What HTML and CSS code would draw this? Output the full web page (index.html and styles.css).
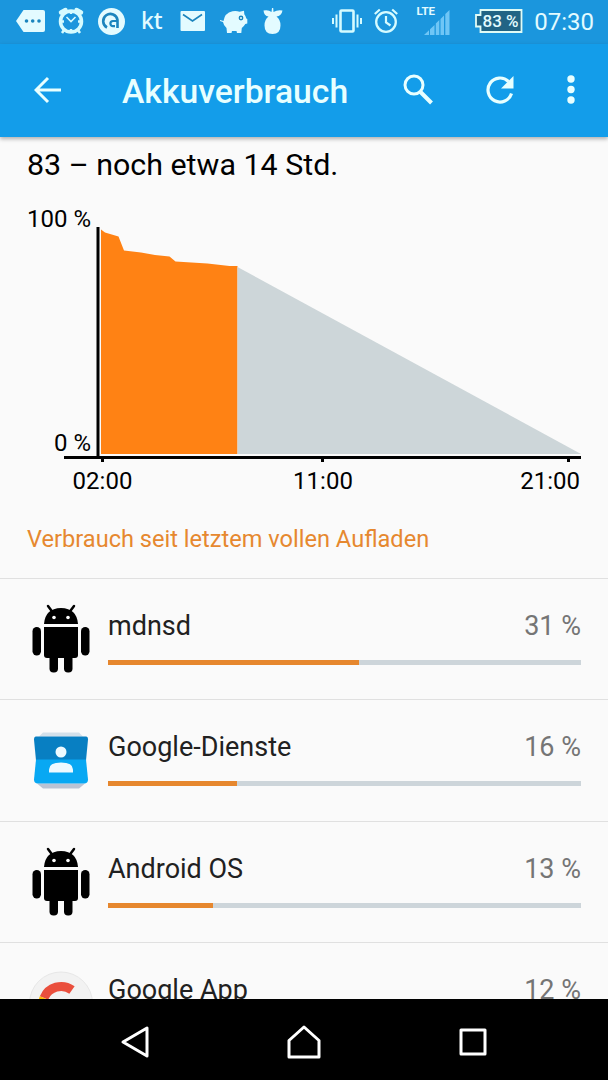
FILE: index.html
```html
<!DOCTYPE html>
<html lang="de">
<head>
    <meta charset="UTF-8">
    <meta name="viewport" content="width=device-width, initial-scale=1.0">
    <title>Akkuverbrauch</title>
    <link rel="stylesheet" href="styles.css">
</head>
<body>
    <div class="status-bar">
        <div class="notifications">
            <svg width="30" height="44" viewBox="16 0 30 44">
                <path class="fill" d="M23.500 10H43q2 0 2 2V30q0 2-2 2H23.500L16 21Z"/>
                <g class="hole"><circle cx="26.500" cy="21" r="1.800"/><circle cx="32.700" cy="21" r="1.800"/><circle cx="39" cy="21" r="1.800"/></g>
            </svg>
            <svg class="alarm-app" width="28" height="44" viewBox="57 0 28 44">
                <circle class="line" cx="71" cy="21.500" r="10.500" stroke-width="3.500"/>
                <path class="line" d="M61 12.500l4.500-2.500M81 12.500l-4.500-2.500" stroke-width="4.500" stroke-linecap="round"/>
                <path class="line" d="M66.500 17l4.500 4.500 4.500-4.500" stroke-width="1.600"/>
                <path class="line" d="M64 30l-2 3M78 30l2 3M71 12v2M71 29v2M62 21.500h2M78 21.500h2" stroke-width="2.500"/>
            </svg>
            <svg class="at-app" width="28" height="44" viewBox="98 0 28 44">
                <circle class="fill" cx="111.500" cy="21.500" r="13.500"/>
                <path class="hole-line" d="M107 27.500A7.200 7.200 0 1 1 117.500 20V28" stroke-width="2.600"/>
                <path class="hole-line" d="M117.500 21H113a2.600 2.600 0 0 0 0 5.200h2" stroke-width="2.200"/>
            </svg>
            <span class="kt">kt</span>
            <svg class="mail-app" width="26" height="44" viewBox="180 0 26 44">
                <rect class="fill" x="180.500" y="11" width="24.500" height="20" rx="1"/>
                <path class="hole-line" d="M183 14.500l9.500 6.500 9.500-6.500" stroke-width="1.600"/>
            </svg>
            <svg class="pig-app" width="28" height="44" viewBox="220 0 28 44">
                <path class="fill" d="M220 20l3.500 1q1-8 9-9.800 4-.7 7 .5l4.500-1 .3 3.500q1.700 2 2 4.300l1 .5v4.500l-2 .5q-1.500 2.500-3.500 4l-.5 5h-4.300l-.5-2h-4.500l-.5 2h-4.500l-.5-5q-3-2.500-3.500-6l-3-1Z"/>
                <circle class="hole-line" cx="241" cy="18" r="1.700" stroke-width="1.400"/>
            </svg>
            <svg class="fruit-app" width="20" height="44" viewBox="263 0 20 44">
                <path class="fill" d="M272 8h1.200l.3 4q4-2.500 9-1.500-1 5.500-6 6 4 3 4 9 0 8.500-8 8.500t-8-8.500q0-6 4-9-4.500-.5-5-6 5-1 8 1.500Z"/>
            </svg>
        </div>
        <div class="system">
            <svg width="32" height="44" viewBox="331 0 32 44">
                <rect class="line" x="340.500" y="10.500" width="13" height="21" rx="1" stroke-width="2.600"/>
                <path class="line" d="M336.500 14.500v13M333 18v6M357.500 14.500v13M361 18v6" stroke-width="2"/>
            </svg>
            <svg class="alarm" width="26" height="44" viewBox="373 0 26 44">
                <circle class="line" cx="386" cy="22" r="9.800" stroke-width="2.300"/>
                <path class="line" d="M374.800 14l5-4.500M397.200 14l-5-4.500M386 16v6.500l4.500 3" stroke-width="2.200"/>
            </svg>
            <svg class="signal" width="34" height="44" viewBox="416 0 34 44">
                <path class="signal-fill" d="M424 35l5-4.800V35ZM430 29.300l4.500-4.300V35H430ZM435.800 23.500l3.500-3.500V35h-3.500ZM440.500 19l3.500-3.500V35h-3.500ZM445.300 14l4.200-4V35h-4.200Z"/>
                <text class="lte" x="416.500" y="14.500">LTE</text>
            </svg>
            <svg class="battery" width="48" height="44" viewBox="475 0 48 44">
                <path class="battery-shell" d="M480.500 10H521.500V32H480.500V26.500H476V15h4.500Z"/>
                <text class="battery-text" x="482.500" y="27">83 %</text>
            </svg>
            <span class="clock">07:30</span>
        </div>
    </div>

    <div class="app-bar">
        <svg class="back" width="28" height="28" viewBox="0 0 28 28">
            <path d="M27 14H3M14 2L2 14l12 12" fill="none" stroke="#e8ffff" stroke-width="3"/>
        </svg>
        <h1>Akkuverbrauch</h1>
        <svg class="search" width="32" height="32" viewBox="0 0 32 32">
            <circle cx="12" cy="11" r="9" fill="none" stroke="#e8ffff" stroke-width="3"/>
            <path d="M18 17.500l11.500 11.500" fill="none" stroke="#e8ffff" stroke-width="4"/>
        </svg>
        <svg class="refresh" width="30" height="30" viewBox="0 0 30 30">
            <path d="M26.500 18.500A12 12 0 1 1 23.500 6.500" fill="none" stroke="#e8ffff" stroke-width="3.200"/>
            <path d="M28.500 1v12.500h-12.500Z" fill="#e8ffff"/>
        </svg>
        <svg class="more" width="8" height="30" viewBox="0 0 8 30">
            <g fill="#e8ffff"><circle cx="4" cy="4" r="3.700"/><circle cx="4" cy="14.500" r="3.700"/><circle cx="4" cy="25" r="3.700"/></g>
        </svg>
    </div>

    <div class="content">
        <h2>83 – noch etwa 14 Std.</h2>
        <svg class="chart" width="608" height="310" viewBox="0 190 608 310">
            <path d="M101 454V229.500l4 3 13.500 4 5.500 14 17 2 14 2.500 14.500 1.500 6 5 32 2 22 2.500h8V454Z" fill="#ff8214"/>
            <path d="M237.500 267L581 454H237.500Z" fill="#cdd6d9"/>
            <path d="M98 227V458M64 457.500H581M102.500 457v5M322.500 457v5M568.500 457v5" fill="none" stroke="#000" stroke-width="3"/>
            <g class="chart-label">
                <text x="91" y="227" text-anchor="end">100 %</text>
                <text x="91" y="450.500" text-anchor="end">0 %</text>
                <text x="102.500" y="488.500" text-anchor="middle">02:00</text>
                <text x="323" y="488.500" text-anchor="middle">11:00</text>
                <text x="580" y="488.500" text-anchor="end">21:00</text>
            </g>
        </svg>
        <h3>Verbrauch seit letztem vollen Aufladen</h3>

        <div class="item">
            <svg class="icon" width="66" height="72" viewBox="0 0 66 72">
                <use href="#android"/>
            </svg>
            <div class="info">
                <div class="label"><span>mdnsd</span><span class="percent">31 %</span></div>
                <div class="bar"><div class="used" style="width: 53.1%"></div></div>
            </div>
        </div>
        <div class="item">
            <svg class="icon" width="66" height="72" viewBox="0 -3.500 66 72">
                <path d="M11 9l4-4h36l4 4Z" fill="#d3e0ea"/>
                <path d="M9 56h48l-6 5H15Z" fill="#bac3d4"/>
                <path d="M8 9h50q2 0 2 3l-2 21H8L6 12q0-3 2-3Z" fill="#087fc2"/>
                <path d="M8 32h50l2 20q0 4-4 4H10q-4 0-4-4Z" fill="#08a8f3"/>
                <circle cx="33" cy="24.500" r="5.500" fill="#eefaff"/>
                <path d="M21 45v-3q0-7 12-7t12 7v3Z" fill="#eefaff"/>
            </svg>
            <div class="info">
                <div class="label"><span>Google-Dienste</span><span class="percent">16 %</span></div>
                <div class="bar"><div class="used" style="width: 27.2%"></div></div>
            </div>
        </div>
        <div class="item">
            <svg class="icon" width="66" height="72" viewBox="0 0 66 72">
                <g id="android">
                    <path d="M16 21q1-15.500 17-16 16 .5 17 16Z"/>
                    <path d="M20 3l4.500 6M46 3l-4.500 6" stroke="#000" stroke-width="2.500" stroke-linecap="round"/>
                    <circle cx="26" cy="14.500" r="1.800" fill="#fff"/>
                    <circle cx="40" cy="14.500" r="1.800" fill="#fff"/>
                    <path d="M16 24h34V52q0 3-3 3H19q-3 0-3-3Z"/>
                    <rect x="4.500" y="24" width="8.500" height="28.500" rx="4.200"/>
                    <rect x="53" y="24" width="8.500" height="28.500" rx="4.200"/>
                    <rect x="21.500" y="47" width="8.500" height="22.500" rx="4"/>
                    <rect x="36" y="47" width="8.500" height="22.500" rx="4"/>
                </g>
            </svg>
            <div class="info">
                <div class="label"><span>Android OS</span><span class="percent">13 %</span></div>
                <div class="bar"><div class="used" style="width: 22.2%"></div></div>
            </div>
        </div>
        <div class="item">
            <svg class="icon" width="66" height="72" viewBox="0 0 66 72">
                <circle cx="33" cy="36.500" r="31.500" fill="#f2f2f2" stroke="#e7e7e7"/>
                <path d="M16 31A18.500 18.500 0 0 1 44 23" fill="none" stroke="#ea4f3d" stroke-width="9"/>
                <path d="M15 41A18.500 18.500 0 0 1 16 31" fill="none" stroke="#fbbc05" stroke-width="9"/>
            </svg>
            <div class="info">
                <div class="label"><span>Google App</span><span class="percent">12 %</span></div>
                <div class="bar"><div class="used" style="width: 20.5%"></div></div>
            </div>
        </div>
    </div>

    <div class="nav-bar">
        <svg width="30" height="34" viewBox="0 0 30 34"><path d="M27 3V31L3 17Z"/></svg>
        <svg width="36" height="36" viewBox="0 0 36 36"><path d="M3 33V16.500L18 3l15 13.500V33Z"/></svg>
        <svg width="30" height="30" viewBox="0 0 30 30"><path d="M3 3H27V27H3Z"/></svg>
    </div>
</body>
</html>
```

FILE: styles.css
```css
body {
    font-family: Roboto, sans-serif;
    margin: 0;
    height: 1080px;
    display: flex;
    flex-direction: column;
    overflow: hidden;
    background-color: #fafafa;
}
svg {
    display: block;
    flex: none;
}
.status-bar {
    flex: none;
    height: 44px;
    display: flex;
    justify-content: space-between;
    padding: 0 14px 0 16px;
    background-color: #1b96dd;
    color: #e3fbff;
}
.notifications, .system {
    display: flex;
}
.fill {
    fill: #e3fbff;
}
.line {
    fill: none;
    stroke: #d5fbff;
}
.hole {
    fill: #1b84bd;
}
.hole-line {
    fill: none;
    stroke: #1b84bd;
}
.alarm-app {
    margin-left: 11px;
}
.at-app {
    margin-left: 13px;
}
.kt {
    width: 39px;
    margin-left: 15px;
    font-family: "Noto Sans", sans-serif;
    font-size: 23px;
    font-weight: 500;
    line-height: 41px;
}
.pig-app {
    margin-left: 14px;
}
.fruit-app {
    margin-left: 15px;
}
.alarm {
    margin-left: 10px;
}
.signal {
    margin-left: 17px;
}
.signal-fill {
    fill: #6fc6f6;
}
.lte {
    font-size: 11.5px;
    font-weight: 700;
    fill: #e3fbff;
}
.battery {
    margin-left: 25px;
}
.battery-shell {
    fill: #216485;
    stroke: #e0fbf6;
    stroke-width: 1.8;
}
.battery-text {
    font-size: 17px;
    font-weight: 500;
    fill: #e3fbff;
}
.clock {
    margin-left: 11px;
    width: 60px;
    font-size: 24px;
    line-height: 44px;
    text-align: right;
}
.app-bar {
    flex: none;
    height: 93px;
    box-sizing: border-box;
    display: flex;
    align-items: center;
    padding: 0 33px 2px 34px;
    background-color: #139dea;
    box-shadow: 0 2px 4px rgba(0,0,0,0.3);
    z-index: 1;
}
.app-bar h1 {
    margin: 4px 0 0 60px;
    flex: 1;
    color: #e8ffff;
    font-size: 33.7px;
    font-weight: 500;
    line-height: 40px;
}
.refresh {
    margin-left: 51px;
}
.more {
    margin-left: 52px;
}
.content {
    flex: 1;
    min-height: 0;
    overflow: hidden;
}
.content h2 {
    margin: 8px 27px 0;
    font-size: 30.4px;
    font-weight: 400;
    line-height: 40px;
    color: #000;
}
.chart {
    margin-top: 5px;
}
.chart-label {
    font-size: 24px;
    fill: #000;
}
.content h3 {
    margin: 25px 27px 24px;
    font-size: 23.6px;
    font-weight: 400;
    line-height: 29px;
    color: #e6882f;
}
.item {
    height: 121.4px;
    box-sizing: border-box;
    display: flex;
    border-top: 1px solid #e0e0e0;
    padding: 24px 27px 0 28px;
}
.info {
    flex: 1;
    margin-left: 14px;
}
.label {
    display: flex;
    justify-content: space-between;
    margin: 7px 0 18px;
    font-size: 27px;
    line-height: 32px;
    color: #212121;
}
.percent {
    color: #757575;
}
.bar {
    height: 5px;
    background-color: #cdd5da;
}
.used {
    height: 5px;
    background-color: #e6872e;
}
.nav-bar {
    flex: none;
    height: 81px;
    display: flex;
    align-items: center;
    justify-content: space-between;
    box-sizing: border-box;
    padding: 5px 120px 0;
    background-color: #000;
}
.nav-bar path {
    fill: none;
    stroke: #fff;
    stroke-width: 3;
    stroke-linejoin: round;
}
```
